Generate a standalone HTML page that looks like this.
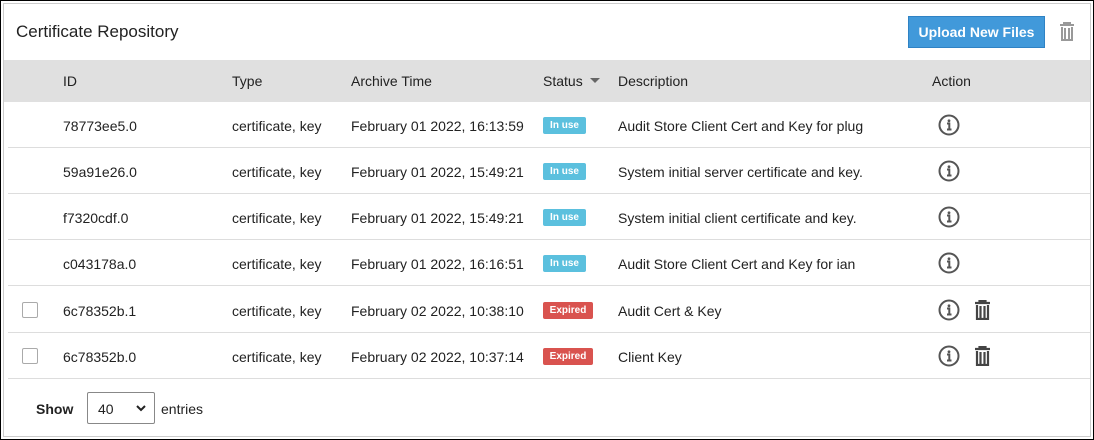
<!DOCTYPE html><html><head><style>
*{box-sizing:border-box;margin:0;padding:0}
body{width:1094px;height:440px;background:#fff;font-family:"Liberation Sans",sans-serif;font-size:14px;color:#222;position:relative;overflow:hidden}
.outer{position:absolute;left:0;top:0;width:1094px;height:440px;border:1px solid #000;}
.panel{position:absolute;left:3px;top:3px;width:1088px;height:434px;border:1px solid #ccc;background:#fff}
.t{position:absolute;white-space:nowrap}
.hdr{position:absolute;left:4px;top:60px;width:1086px;height:42px;background:#e0e0e0}
.row{position:absolute;left:8px;width:1082px;border-bottom:1px solid #ddd;height:46px}
.badge{position:absolute;height:17px;border-radius:2px;color:#fff;font-size:10px;font-weight:bold;line-height:17px;text-align:center}
.cb{position:absolute;width:16px;height:16px;border:1px solid #aaa;border-radius:2px;background:#fff}
</style></head><body>
<div class="outer"></div><div class="panel"></div>
<div class="t" style="left:16px;top:22px;font-size:17px;color:#222">Certificate Repository</div>
<div style="position:absolute;left:908px;top:16px;width:137px;height:32px;background:#4199da;border:1px solid #2f82c4;color:#fff;font-weight:bold;font-size:14px;line-height:30px;text-align:center">Upload New Files</div>
<svg style="position:absolute;left:1059px;top:22px" width="16" height="19" viewBox="0 0 16 19"><path d="M1 3h14M5 3V1h6v2M3 5v13h10V5M6 6v11M10 6v11" stroke="#999" stroke-width="2" fill="none"/></svg>
<div class="hdr"></div>
<div class="t" style="left:63px;top:73px">ID</div>
<div class="t" style="left:232px;top:73px">Type</div>
<div class="t" style="left:351px;top:73px">Archive Time</div>
<div class="t" style="left:543px;top:73px">Status</div>
<svg style="position:absolute;left:590px;top:78px" width="10" height="6"><path d="M0 0h10L5 5z" fill="#666"/></svg>
<div class="t" style="left:618px;top:73px">Description</div>
<div class="t" style="left:932px;top:73px">Action</div>
<div id="rows"></div>
<script>
var d=[["78773ee5.0","February 01 2022, 16:13:59",0,"Audit Store Client Cert and Key for plug"],
["59a91e26.0","February 01 2022, 15:49:21",0,"System initial server certificate and key."],
["f7320cdf.0","February 01 2022, 15:49:21",0,"System initial client certificate and key."],
["c043178a.0","February 01 2022, 16:16:51",0,"Audit Store Client Cert and Key for ian"],
["6c78352b.1","February 02 2022, 10:38:10",1,"Audit Cert &amp; Key"],
["6c78352b.0","February 02 2022, 10:37:14",1,"Client Key"]];
var h="",tops=[102,148,194,240,287,333];
d.forEach(function(r,i){var y=tops[i],ty=y+16;
h+='<div class="row" style="top:'+y+'px"></div>';
if(r[2])h+='<div class="cb" style="left:22px;top:'+(y+15)+'px"></div>';
h+='<div class="t" style="left:63px;top:'+ty+'px">'+r[0]+'</div><div class="t" style="left:232px;top:'+ty+'px">certificate, key</div><div class="t" style="left:351px;top:'+ty+'px">'+r[1]+'</div>';
h+=r[2]?'<div class="badge" style="left:543px;top:'+(y+15)+'px;width:50px;background:#d9534f">Expired</div>':'<div class="badge" style="left:543px;top:'+(y+15)+'px;width:43px;background:#5bc0de">In use</div>';
h+='<div class="t" style="left:618px;top:'+ty+'px">'+r[3]+'</div>';
h+='<svg style="position:absolute;left:938px;top:'+(y+12)+'px" width="22" height="22" viewBox="0 0 22 22"><circle cx="11" cy="11" r="9.5" stroke="#555" stroke-width="2" fill="none"/><circle cx="11" cy="6.8" r="1.4" fill="#555"/><path d="M9 9.5h2.3v5.5M9 15.5h4.5" stroke="#555" stroke-width="2" fill="none"/></svg>';
if(r[2])h+='<svg style="position:absolute;left:974px;top:'+(y+13)+'px" width="17" height="20" viewBox="0 0 17 20"><path d="M1 3h15M5.5 3V1h6v2M3 5v14h11V5M6.5 6v12M10.5 6v12" stroke="#444" stroke-width="2.2" fill="none"/></svg>';
});
document.getElementById("rows").innerHTML=h;
</script>
<div class="t" style="left:36px;top:401px;font-weight:bold">Show</div>
<div style="position:absolute;left:87px;top:392px;width:68px;height:32px;border:1px solid #888;border-radius:2px"></div>
<div class="t" style="left:98px;top:401px">40</div>
<svg style="position:absolute;left:136px;top:405px" width="10" height="7"><path d="M1 1l4 4 4-4" stroke="#222" stroke-width="2" fill="none"/></svg>
<div class="t" style="left:161px;top:401px">entries</div>
</body></html>
